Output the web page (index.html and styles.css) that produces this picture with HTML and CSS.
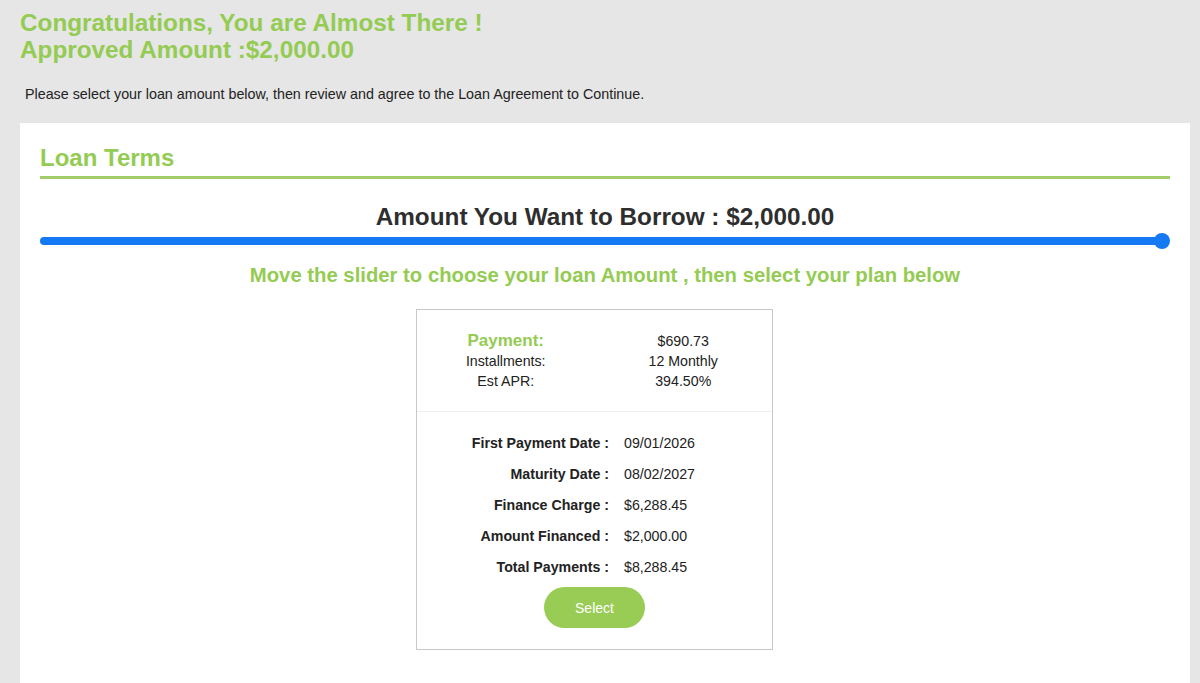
FILE: index.html
```html
<!DOCTYPE html>
<html lang="en">
<head>
    <meta charset="UTF-8">
    <meta name="viewport" content="width=device-width, initial-scale=1.0">
    <title>Loan Terms</title>
    <link rel="stylesheet" href="styles.css">
</head>
<body>
    <div class="page">
        <div class="header">
            <h1>Congratulations, You are Almost There !</h1>
            <h1>Approved Amount :$2,000.00</h1>
        </div>

        <p class="intro">Please select your loan amount below, then review and agree to the Loan Agreement to Continue.</p>

        <div class="card">
            <h2 class="card-title">Loan Terms</h2>

            <div class="borrow">Amount You Want to Borrow : $2,000.00</div>
            <div class="slider">
                <div class="slider-track"></div>
                <div class="slider-thumb"></div>
            </div>
            <div class="hint">Move the slider to choose your loan Amount , then select your plan below</div>

            <div class="plan">
                <div class="plan-top">
                    <div class="plan-label payment">Payment:</div>
                    <div class="plan-value">$690.73</div>
                    <div class="plan-label">Installments:</div>
                    <div class="plan-value">12 Monthly</div>
                    <div class="plan-label">Est APR:</div>
                    <div class="plan-value">394.50%</div>
                </div>
                <div class="plan-details">
                    <div class="detail-label">First Payment Date :</div>
                    <div class="detail-value">09/01/2026</div>
                    <div class="detail-label">Maturity Date :</div>
                    <div class="detail-value">08/02/2027</div>
                    <div class="detail-label">Finance Charge :</div>
                    <div class="detail-value">$6,288.45</div>
                    <div class="detail-label">Amount Financed :</div>
                    <div class="detail-value">$2,000.00</div>
                    <div class="detail-label">Total Payments :</div>
                    <div class="detail-value">$8,288.45</div>
                </div>
                <div class="plan-action">
                    <button class="select-btn">Select</button>
                </div>
            </div>
        </div>
    </div>
</body>
</html>
```

FILE: styles.css
```css
body {
    margin: 0;
    background-color: #e6e6e6;
    font-family: "Liberation Sans", Arial, sans-serif;
    color: #222222;
    overflow: hidden;
}
.page {
    padding: 9px 10px 0 20px;
}
.header h1 {
    margin: 0;
    font-size: 24.3px;
    line-height: 27px;
    color: #94cb52;
}
.intro {
    margin: 22px 0 0 5px;
    font-size: 14.3px;
    line-height: 18px;
}
.card {
    background-color: #ffffff;
    margin-top: 20px;
    padding: 20px 20px 40px 20px;
    height: 600px;
}
.card-title {
    margin: 0;
    font-size: 24px;
    line-height: 30px;
    color: #94cb52;
    padding-bottom: 3px;
    border-bottom: 3px solid #a2cd6a;
}
.borrow {
    margin-top: 24px;
    text-align: center;
    font-size: 24.3px;
    font-weight: bold;
    line-height: 28px;
    color: #2e2e2e;
}
.slider {
    position: relative;
    height: 16px;
    margin-top: 2px;
}
.slider-track {
    position: absolute;
    left: 0;
    right: 6px;
    top: 4px;
    height: 8px;
    border-radius: 4px;
    background-color: #1479f2;
}
.slider-thumb {
    position: absolute;
    right: 0;
    top: 0;
    width: 16px;
    height: 16px;
    border-radius: 50%;
    background-color: #1479f2;
}
.hint {
    margin-top: 14px;
    text-align: center;
    font-size: 20.3px;
    font-weight: bold;
    line-height: 24px;
    color: #94cb52;
}
.plan {
    width: 355px;
    margin: 22px 0 0 376px;
    border: 1px solid #c8c8c8;
}
.plan-top {
    display: grid;
    grid-template-columns: 1fr 1fr;
    text-align: center;
    padding: 21px 0 20px 0;
    border-bottom: 1px solid #f0f0f0;
    font-size: 14.2px;
    line-height: 20px;
}
.plan-label.payment {
    font-size: 17px;
    font-weight: bold;
    color: #94cb52;
}
.plan-value {
    color: #222222;
}
.plan-details {
    display: grid;
    grid-template-columns: 192px 1fr;
    column-gap: 15px;
    row-gap: 11px;
    padding-top: 21px;
    font-size: 14.2px;
    line-height: 20px;
}
.detail-label {
    text-align: right;
    font-weight: bold;
    color: #222222;
}
.detail-value {
    color: #222222;
}
.plan-action {
    text-align: center;
    padding: 10px 0 21px 0;
}
.select-btn {
    width: 101px;
    height: 41px;
    border: none;
    border-radius: 21px;
    background-color: #98cc55;
    color: #ffffff;
    font-family: "Liberation Sans", Arial, sans-serif;
    font-size: 14px;
    cursor: pointer;
}
```
